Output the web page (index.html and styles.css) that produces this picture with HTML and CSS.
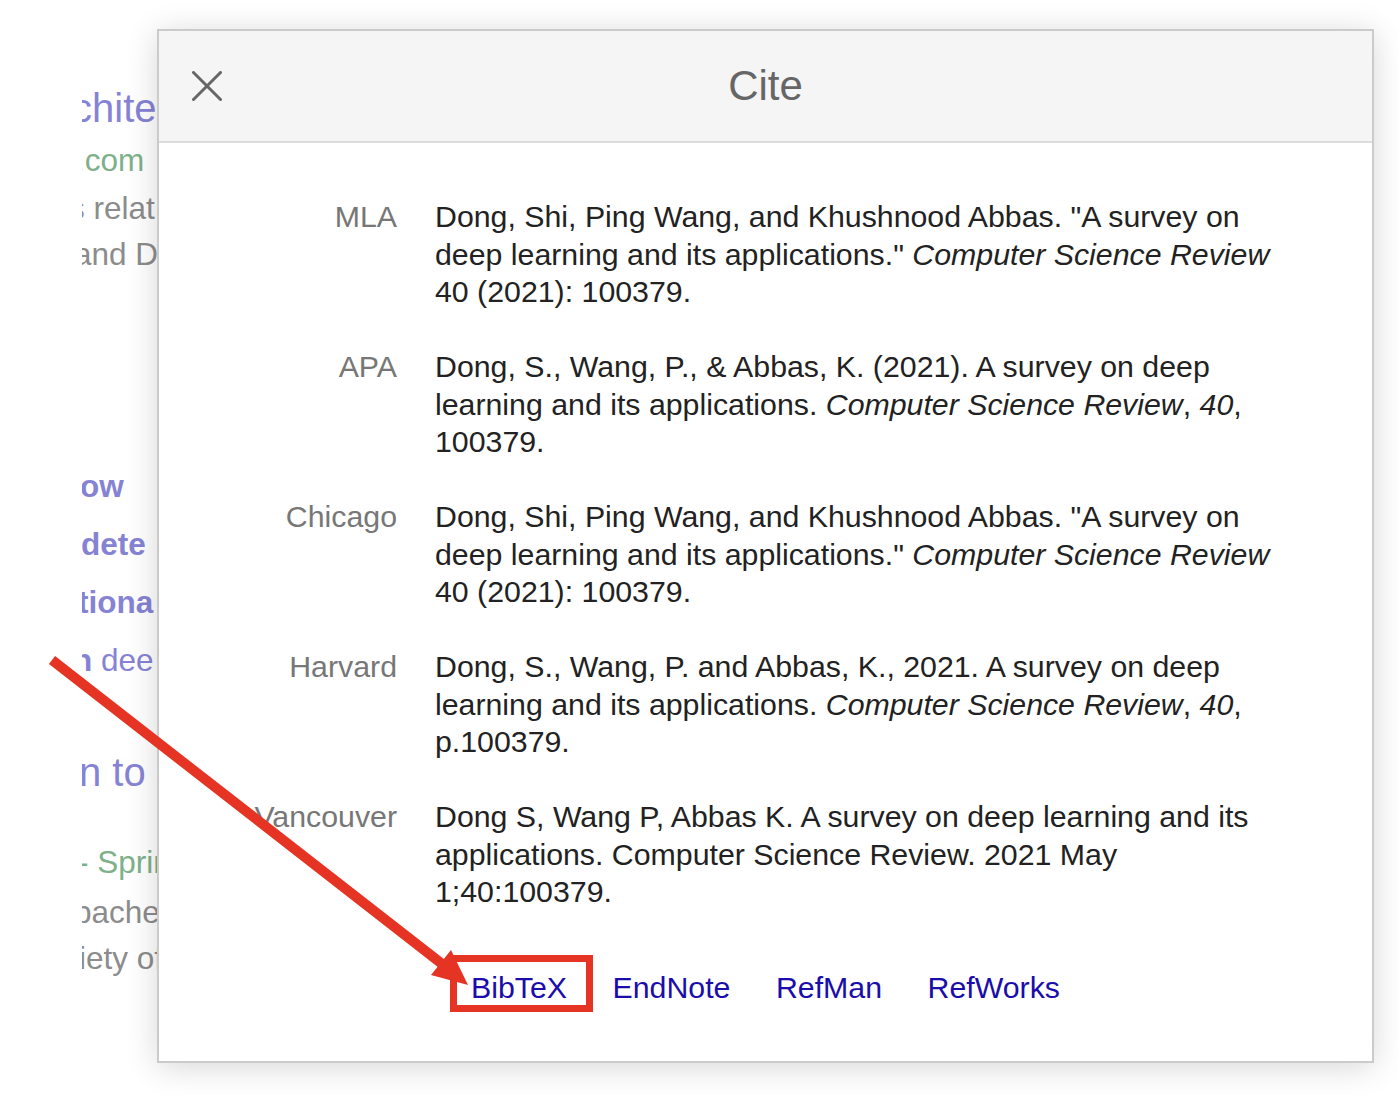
FILE: index.html
```html
<!DOCTYPE html>
<html lang="en">
<head>
<meta charset="utf-8">
<title>Cite</title>
<link rel="stylesheet" href="styles.css">
</head>
<body>
<div class="page">
  <div class="results">
    <div class="ln t1 title">chite</div>
    <div class="ln t2 green">.com</div>
    <div class="ln t3 gray">s relat</div>
    <div class="ln t4 gray">and D</div>
    <div class="ln t5 rel"><b>ow</b></div>
    <div class="ln t6 rel"><b>dete</b></div>
    <div class="ln t7 rel"><b>tiona</b></div>
    <div class="ln t8 rel"><b>n</b> dee</div>
    <div class="ln t9 title">n to</div>
    <div class="ln t10 green">- Sprir</div>
    <div class="ln t11 gray">pache</div>
    <div class="ln t12 gray">iety of</div>
  </div>
</div>

<div class="dialog" role="dialog" aria-label="Cite">
  <div class="dlg-head">
    <button class="close" aria-label="Close">
      <svg width="30" height="30" viewBox="0 0 30 30"><path d="M1.5 1.5 L28.5 28.5 M28.5 1.5 L1.5 28.5" stroke="#666" stroke-width="3" stroke-linecap="round" fill="none"/></svg>
    </button>
    <h2 class="dlg-title">Cite</h2>
    <span></span>
  </div>
  <div class="dlg-body">
    <div class="cites">
      <div class="lbl">MLA</div>
      <div class="txt">Dong, Shi, Ping Wang, and Khushnood Abbas. "A survey on deep learning and its applications." <i>Computer Science Review</i> 40 (2021): 100379.</div>
      <div class="lbl">APA</div>
      <div class="txt">Dong, S., Wang, P., &amp; Abbas, K. (2021). A survey on deep learning and its applications. <i>Computer Science Review</i>, <i>40</i>, 100379.</div>
      <div class="lbl">Chicago</div>
      <div class="txt">Dong, Shi, Ping Wang, and Khushnood Abbas. "A survey on deep learning and its applications." <i>Computer Science Review</i> 40 (2021): 100379.</div>
      <div class="lbl">Harvard</div>
      <div class="txt">Dong, S., Wang, P. and Abbas, K., 2021. A survey on deep learning and its applications. <i>Computer Science Review</i>, <i>40</i>, p.100379.</div>
      <div class="lbl">Vancouver</div>
      <div class="txt">Dong S, Wang P, Abbas K. A survey on deep learning and its applications. Computer Science Review. 2021 May 1;40:100379.</div>
    </div>
    <div class="links">
      <a href="#" class="lk marked">BibTeX</a>
      <a href="#" class="lk">EndNote</a>
      <a href="#" class="lk">RefMan</a>
      <a href="#" class="lk">RefWorks</a>
    </div>
  </div>
</div>

<svg class="arrow" width="1398" height="1094" viewBox="0 0 1398 1094" aria-hidden="true">
  <line x1="52" y1="660" x2="446" y2="967" stroke="#e63424" stroke-width="10"/>
  <polygon points="468,985 451,950 431,975" fill="#e63424"/>
</svg>
</body>
</html>
```

FILE: styles.css
```css
html, body {
  margin: 0;
  padding: 0;
  background: #fff;
  font-family: "Liberation Sans", Arial, sans-serif;
}

.page {
  width: 1398px;
  height: 1094px;
  overflow: hidden;
  padding-left: 82px;
  box-sizing: border-box;
}

.results {
  width: 90px;
  overflow: hidden;
  padding-top: 82px;
}

.ln {
  white-space: nowrap;
}

.title { font-size: 40px; color: #8683d5; }
.green { font-size: 31.5px; color: #7eb08a; }
.gray  { font-size: 31.5px; color: #8c8c8c; }
.rel   { font-size: 31.5px; color: #8683d5; line-height: 58px; }
.rel b { font-weight: bold; }

.t1 { line-height: 52px; margin-left: -10px; }
.t2 { line-height: 52px; margin-left: -6px; }
.t3 { line-height: 44px; margin-left: -13px; }
.t4 { line-height: 48px; margin-left: -8px; }
.t5 { margin-top: 179px; margin-left: -2px; }
.t6 { margin-left: -1px; }
.t7 { margin-left: -4px; }
.t8 { margin-left: -9px; }
.t9 { line-height: 52px; margin-top: 57px; margin-left: -3px; }
.t10 { line-height: 52px; margin-top: 38px; margin-left: -4px; }
.t11 { line-height: 48px; margin-left: -8px; }
.t12 { line-height: 44px; margin-left: -3px; }

.dialog {
  position: absolute;
  left: 157px;
  top: 29px;
  width: 1217px;
  height: 1034px;
  box-sizing: border-box;
  border: 2px solid #cbcbcb;
  background: #fff;
  box-shadow: 0 4px 30px rgba(0, 0, 0, 0.16);
  z-index: 2;
}

.dlg-head {
  height: 110px;
  background: #f5f5f5;
  border-bottom: 2px solid #dcdcdc;
  display: grid;
  grid-template-columns: 1fr auto 1fr;
  align-items: center;
}

.close {
  justify-self: start;
  margin-left: 33px;
  padding: 0;
  border: 0;
  background: none;
  width: 30px;
  height: 30px;
  display: flex;
}

.dlg-title {
  margin: 0;
  font-weight: normal;
  font-size: 42px;
  color: #666;
  line-height: 48px;
}

.dlg-body {
  padding-top: 55px;
}

.cites {
  display: grid;
  grid-template-columns: 238px 852px;
  column-gap: 38px;
  row-gap: 37.5px;
  font-size: 30.3px;
  line-height: 37.5px;
}

.lbl {
  text-align: right;
  color: #777;
}

.txt {
  color: #222;
}

.links {
  margin-top: 58px;
  padding-left: 312px;
  display: flex;
  gap: 45.5px;
  font-size: 30.3px;
  line-height: 37.5px;
}

.lk {
  color: #1a0dab;
  text-decoration: none;
}

.marked {
  position: relative;
}

.marked::after {
  content: "";
  position: absolute;
  left: -21px;
  right: -26px;
  top: -14px;
  bottom: -6px;
  border: 7px solid #e63424;
}

.arrow {
  position: absolute;
  left: 0;
  top: 0;
  z-index: 3;
  pointer-events: none;
}
```
